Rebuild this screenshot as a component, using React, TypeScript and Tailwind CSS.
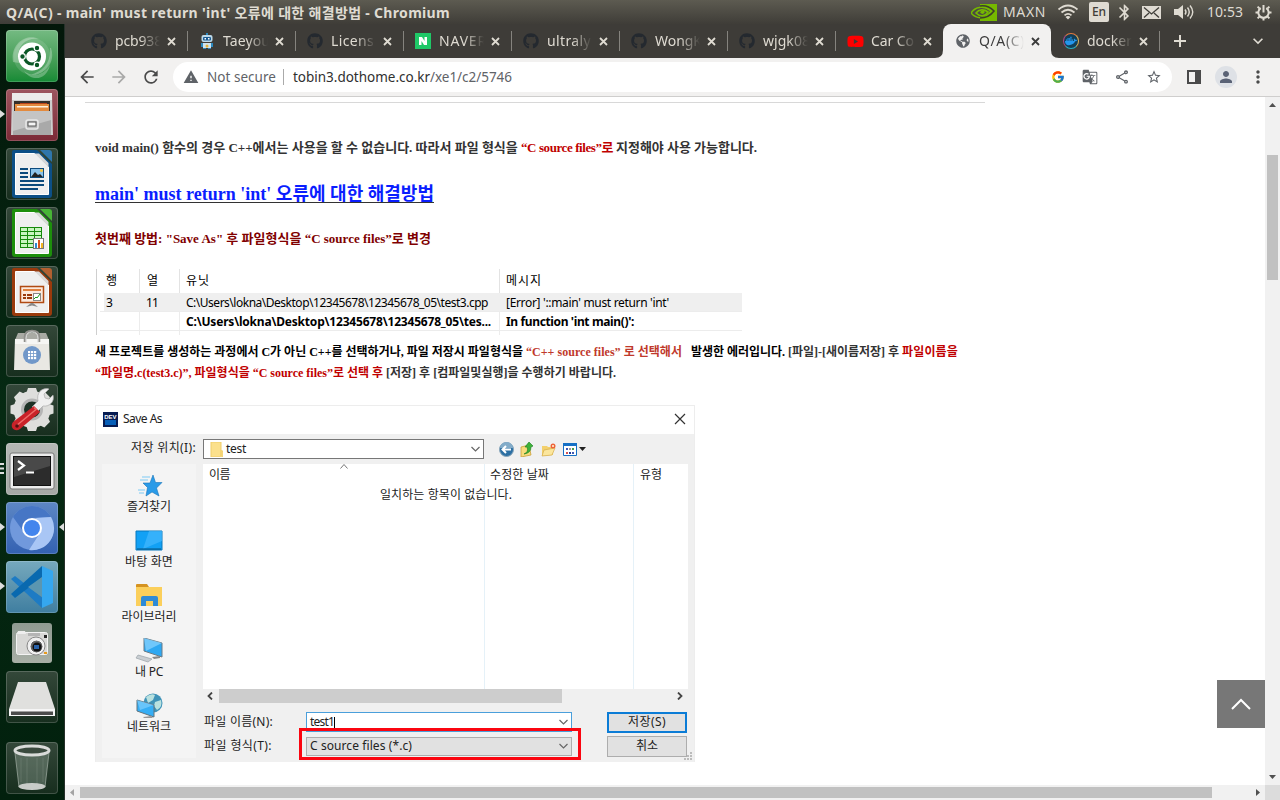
import { useLayoutEffect, useRef, type ReactNode } from "react";
import {
  MdArrowBack, MdArrowForward, MdBluetooth, MdExpandMore, MdGTranslate, MdMoreVert,
  MdOutlineShare, MdPerson, MdRefresh, MdStarBorder, MdWarning,
} from "react-icons/md";
import { FaGithub, FaGlobeAmericas, FaDocker, FaYoutube } from "react-icons/fa";
import { FcGoogle } from "react-icons/fc";

/* Single line of text whose tracking is adjusted to fill a given width. */
function Fit({ w, className = "", children }: { w: number; className?: string; children: ReactNode }) {
  const ref = useRef<HTMLSpanElement>(null);
  useLayoutEffect(() => {
    const el = ref.current;
    if (!el) return;
    el.style.letterSpacing = "0px";
    const n = (el.textContent ?? "").length;
    el.style.letterSpacing = `${(w - el.getBoundingClientRect().width) / n}px`;
  }, [w]);
  return <span ref={ref} className={`inline-block whitespace-pre ${className}`}>{children}</span>;
}

const Svg = ({ children, className = "size-[52px]", box = "0 0 52 52" }: { children: ReactNode; className?: string; box?: string }) => (
  <svg viewBox={box} className={`block shrink-0 ${className}`}>{children}</svg>
);

/* ---------- launcher ---------- */

function Tile({ children, className = "bg-linear-to-b from-[#34483a] to-[#172e1e]", mark }: { children: ReactNode; className?: string; mark?: "one" | "three" | "active" }) {
  return (
    <div className="relative flex h-[52px] w-full shrink-0 justify-center">
      {mark === "three" && (
        <Svg className="absolute left-0 top-[20px] h-3 w-1" box="0 0 4 12"><path d="M0 0h4v2H0zM0 4.5h4v2H0zM0 9h4v2H0z" fill="#ddd" /></Svg>
      )}
      {(mark === "one" || mark === "active") && (
        <Svg className="absolute left-0 top-[21px] h-2 w-[5px]" box="0 0 5 8"><path d="M0 0 5 4 0 8z" fill="#ddd" /></Svg>
      )}
      {mark === "active" && (
        <Svg className="absolute right-0 top-[21px] h-2 w-[5px]" box="0 0 5 8"><path d="M5 0 0 4 5 8z" fill="#ddd" /></Svg>
      )}
      <div className={`size-[52px] overflow-hidden rounded-[4px] ${className}`}>{children}</div>
      <div className="absolute left-[6px] top-0 size-[52px] rounded-[4px] shadow-[inset_0_0_0_1px_rgba(255,255,255,0.18)]" />
    </div>
  );
}

function Doc({ color, corner, children }: { color: string; corner: string; children: ReactNode }) {
  return (
    <Svg>
      <path d="M6 4q0-2 2-2h23L46 16v31q0 3-3 3H9q-3 0-3-3z" fill={color} />
      <path d="M34 2h9q3 0 3 3v9z" fill={corner} opacity=".85" />
      <path d="M9.500 5.500h19L42.500 19v27.500h-33z" fill="#efefef" stroke="#fff" />
      <path d="M28.500 5.500 42.500 19V15L33 5.500z" fill="#d9d9d9" />
      {children}
    </Svg>
  );
}

function Launcher() {
  return (
    <aside className="flex w-[65px] shrink-0 flex-col border-r border-[#26302a] bg-linear-to-b from-[#03170a] via-[#062a13] to-[#02200d] pt-[6px] gap-[7px]">
      <Tile className="bg-linear-to-b from-[#74ba82] to-[#138a35]">
        <Svg>
          <circle cx="26" cy="26.500" r="18.500" fill="#fff" opacity=".12" />
          <path d="M7 32C4 14 20 3 33 9c-14-2-24 8-20 24zM45 18c5 14-6 28-21 27 13-4 21-12 20-27zM18 41c9 7 20 4 26-6-3 14-17 18-26 6z" fill="#fff" opacity=".28" />
          <circle cx="26" cy="26.500" r="14" fill="#fff" />
          <circle cx="26" cy="26.500" r="7.500" fill="none" stroke="#0b5726" strokeWidth="3.200" />
          <g fill="#0b5726" stroke="#fff" strokeWidth="1.200"><circle cx="16.500" cy="26.500" r="2.800" /><circle cx="31" cy="18" r="2.800" /><circle cx="31" cy="35" r="2.800" /></g>
        </Svg>
      </Tile>
      <Tile mark="one" className="bg-linear-to-b from-[#9d5560] to-[#7b2936]">
        <Svg>
          <path d="M6 5q0-1 1-1h38q1 0 1 1l1 41H5z" fill="#cdcdcd" /><path d="M6 4h40v7H6z" fill="#ececec" />
          <path d="M8 12h36v11H8z" fill="#35302c" /><path d="M9 15h34v8H9z" fill="#e38a3e" /><path d="M11 17h31v1.500H11z" fill="#fff2dd" /><path d="M14 14h27v1H14z" fill="#b9441a" />
          <path d="M7 22h38v24H7z" fill="#a9a9a9" /><path d="M7 22h38v9L7 42z" fill="#c4c4c4" />
          <rect x="20" y="31" width="12" height="9" rx="2" fill="#bbb" stroke="#e8e8e8" strokeWidth="1.500" /><rect x="22" y="33" width="8" height="4" fill="#f5f5f5" stroke="#555" />
        </Svg>
      </Tile>
      <Tile>
        <Doc color="#0c4f86" corner="#2f7fc0">
          <path d="M14 20h8v2h-8zM14 24h8v2h-8zM14 28h8v2h-8zM14 32h24v2H14zM14 36h24v2H14zM14 40h18v2H14z" fill="#0c4a7c" />
          <rect x="24.500" y="20.500" width="13" height="9" fill="#8cc3ea" stroke="#0c4a7c" /><circle cx="35.500" cy="22.500" r="1.500" fill="#f5c542" /><path d="m25 29 4-5 3 3 2-1 3 3z" fill="#222" />
        </Doc>
      </Tile>
      <Tile>
        <Doc color="#1d8f0c" corner="#4bc936">
          <path d="M14 20h22v21H14z" fill="#168a0b" /><g fill="#c9f5c0">{[21, 25, 29, 33, 37].map((y) => [15, 22, 29].map((x) => <rect key={`${x}${y}`} x={x} y={y} width="6" height="3" />))}</g>
          <rect x="27.500" y="31.500" width="10" height="10" fill="#fff" stroke="#777" /><path d="M29 36h2v5h-2z" fill="#2f8ad0" /><path d="M32 33h2v8h-2z" fill="#d9541e" /><path d="M35 36h2v5h-2z" fill="#f3b61f" />
        </Doc>
      </Tile>
      <Tile>
        <Doc color="#9a3a0c" corner="#c9652f">
          <path d="M14.500 20.500h23v16h-23z" fill="#fce9dc" stroke="#b04a12" strokeWidth="1.500" /><path d="M17 23h18v2H17z" fill="#e0813f" />
          <path d="M17 28h3v2h-3zM17 31h3v2h-3zM21 28h5v2h-5zM21 31h5v2h-5z" fill="#9a3a0c" /><rect x="27.500" y="27.500" width="7" height="7" fill="#fff" stroke="#888" /><path d="m28 33 2-2 1 1 3-4" stroke="#1a9a1a" fill="none" />
          <path d="m20 41 5-4h2l5 4-6-1.500z" fill="#888" />
        </Doc>
      </Tile>
      <Tile>
        <Svg>
          <path d="m9 15 3-7h28l3 7z" fill="#a9aaa4" /><path d="M9 14h34l1 31H8z" fill="#e9e8e3" /><path d="M9 14h34v5H9z" fill="#fff" opacity=".6" />
          <path d="M19 17v-5q0-6 7-6t7 6v5" fill="none" stroke="#8e8e8a" strokeWidth="2.500" /><path d="M20 18v-5q0-6 6-6t6 6v5" fill="none" stroke="#e8e8e8" strokeWidth="1" />
          <circle cx="26" cy="30" r="9" fill="#7198c9" /><g fill="#fff">{[26, 29, 32].map((y) => [22, 25, 28].map((x) => <rect key={`${x}${y}`} x={x} y={y} width="2.200" height="2.200" />))}</g>
        </Svg>
      </Tile>
      <Tile>
        <Svg>
          <circle cx="26" cy="25.500" r="14" fill="none" stroke="#dededc" strokeWidth="9" />
          <g fill="#dededc">{[0, 45, 90, 135, 180, 225, 270, 315].map((a) => <path key={a} d="M22 4h8l2 6H20z" transform={`rotate(${a} 26 25.500)`} />)}</g>
          <circle cx="26" cy="25.500" r="9.500" fill="#1e3226" stroke="#b5b5b5" strokeWidth="3" />
          <path d="M32 17c-2-8 4-14 11-12l-5 5 1 4 4 1 4-4c2 7-4 12-10 11l-6 6-5-5z" fill="#f0f0f0" stroke="#aaa" strokeWidth=".7" />
          <path d="m28 22 6 6-20 17c-5 4-11-2-7-7z" fill="#c92229" /><path d="m28 23.500 2 2L10 42" stroke="#ef6b68" strokeWidth="1.500" fill="none" /><circle cx="11" cy="42" r="1.800" fill="#551012" />
        </Svg>
      </Tile>
      <Tile mark="three" className="bg-linear-to-b from-[#b5b8b5] to-[#a5a8a5]">
        <Svg>
          <rect x="4" y="10" width="44" height="36" rx="2" fill="#ececec" stroke="#777" /><rect x="7.500" y="13.500" width="37" height="29" fill="#2c2c2c" stroke="#111" /><path d="M8 14h36v9L8 34z" fill="#fff" opacity=".14" />
          <path d="m12 18 6 4.500-6 4.500" stroke="#fff" strokeWidth="2.200" fill="none" /><path d="M20 29.500h8" stroke="#fff" strokeWidth="2" />
        </Svg>
      </Tile>
      <Tile mark="active" className="bg-linear-to-b from-[#5d87c4] to-[#3361b2]">
        <Svg>
          <circle cx="26" cy="26" r="22" fill="#7199dc" /><path d="M7 15A22 22 0 0 1 45 15L26 16 17 29z" fill="#4676c5" /><path d="M45 15a22 22 0 0 1-22 33l11-17-4-15z" fill="#a9c6f5" />
          <circle cx="26" cy="26" r="10" fill="#fff" /><circle cx="26" cy="26" r="8" fill="#4385ed" />
        </Svg>
      </Tile>
      <Tile mark="one" className="bg-linear-to-b from-[#76a9bd] to-[#3f7ea0]">
        <Svg>
          <path d="m5 18 4-3 29 23-2 9z" fill="#1d7bc4" /><path d="m5 33 4 4 29-22-2-10z" fill="#0969af" /><path d="M36 5 47 10v32l-11 5z" fill="#35a7ef" /><path d="M36 16v20L22 26z" fill="#5b96b0" />
        </Svg>
      </Tile>
      <div className="ml-3 mt-[3px] size-10 shrink-0 rounded-[3px] bg-linear-to-b from-[#8f9b91] to-[#a8afa6]">
        <Svg className="size-10" box="0 0 40 40">
          <rect x="4.500" y="9.500" width="31" height="22" rx="2" fill="#d8d8d6" stroke="#f3f3f3" /><path d="M6 8h7l1 3H5z" fill="#eee" /><path d="M16 10h12v3H16z" fill="#b5b5b5" /><rect x="32" y="12" width="3" height="3" fill="#222" />
          <circle cx="24" cy="23" r="9" fill="#eee" stroke="#888" /><circle cx="24.500" cy="23.500" r="6.500" fill="#666" stroke="#fff" /><circle cx="25" cy="24" r="4.500" fill="#111" /><path d="M22 22h5v4h-5z" fill="#2961a8" /><path d="M32 29h3v2h-3z" fill="#e69a1c" />
        </Svg>
      </div>
      <div className="mt-px">
        <Tile>
          <Svg><path d="M12 11h28l9 27H3z" fill="#e0e0de" /><path d="M3 38h46v7H3z" fill="#f5f5f5" /><path d="M5 40.500h42v3.500H5z" fill="#4b4b4b" /></Svg>
        </Tile>
      </div>
      <div className="mt-3">
        <Tile>
          <Svg>
            <path d="m9 9 4 36q13 5 26 0l4-36z" fill="#c5d3c8" opacity=".28" /><ellipse cx="26" cy="44.500" rx="13.500" ry="3.500" fill="#c8cbc8" />
            <ellipse cx="26" cy="8.500" rx="17" ry="4.500" fill="#3a4a3e" stroke="#d9dbd9" strokeWidth="3" /><path d="m9 11 4 34M43 11l-4 34" stroke="#bcc6bd" strokeWidth=".6" /><path d="M15 16v24M21 16v26M31 16v26M37 16v24" stroke="#dfe8e0" opacity=".12" />
          </Svg>
        </Tile>
      </div>
    </aside>
  );
}

/* ---------- system bar ---------- */

function SystemBar() {
  return (
    <header className="flex h-6 shrink-0 items-center bg-linear-to-b from-[#5d5b51] to-[#3f3d38] pl-[6px] text-[#dfdbd2]">
      <Fit w={444} className="text-[14px] font-bold leading-[25px]">Q/A(C) - main' must return 'int' 오류에 대한 해결방법 - Chromium</Fit>
      <Svg className="ml-auto h-[17px] w-[26px]" box="0 0 26 17">
        <path d="M9 0h17v17H9z" fill="#76b900" />
        <path d="M0 9C4 3 12 1 20 7c-5 8-14 9-20 2z" fill="#4c4a43" stroke="#76b900" strokeWidth="1.500" />
        <path d="M5 9c3-4 8-4 12-1-3 5-8 5-12 1z" fill="none" stroke="#76b900" strokeWidth="1.600" /><path d="M9 8c2-2 4-1 5 0-2 3-4 2-5 0z" fill="#76b900" /><path d="M9 2c6-1 11 2 14 5-3 4-8 7-14 7" fill="none" stroke="#3c3f2a" strokeWidth="1.600" />
      </Svg>
      <Fit w={43} className="ml-[6px] text-[14px] leading-6">MAXN</Fit>
      <Svg className="ml-[11px] h-[16px] w-[22px]" box="0 0 22 16">
        <g fill="none" stroke="#dfdbd2" strokeWidth="1.700"><path d="M1.500 5.500q9.500-8 19 0" /><path d="M4.500 8.500q6.500-5.500 13 0" /><path d="M7.500 11.300q3.500-3 7 0" /></g><path d="m11 15.500-2.500-2.600q2.500-2 5 0z" fill="#dfdbd2" />
      </Svg>
      <span className="ml-[10px] flex h-5 w-5 items-center justify-center rounded-[2px] bg-[#dfdbd2] text-[12px] font-medium text-[#3f3d38]">En</span>
      <MdBluetooth className="ml-[6px] size-[19px]" />
      <Svg className="ml-[8px] h-[13px] w-[19px]" box="0 0 19 13"><path d="M0 0h19v13H0z" fill="#dfdbd2" /><path d="m2 1.500 7.500 6.500L17 1.500M2 11.500 7 7m10 4.500L12 7" fill="none" stroke="#3f3d38" strokeWidth="1.300" /></Svg>
      <Svg className="ml-[13px] h-[16px] w-[21px]" box="0 0 21 16">
        <path d="M0 5h4l5-4v14l-5-4H0z" fill="#dfdbd2" /><g fill="none" stroke="#dfdbd2" strokeWidth="1.400"><path d="M11 5.500q2 2.500 0 5" /><path d="M13.500 3.500q3.500 4.500 0 9" /><path d="M16 1.500q5.500 6.500 0 13" /></g>
      </Svg>
      <Fit w={36} className="ml-[12px] text-[14px] leading-6">10:53</Fit>
      <Svg className="ml-3 mr-[8px] size-[17px]" box="0 0 17 17">
        <g fill="none" stroke="#dfdbd2"><path d="M5.800 4.200a5.200 5.200 0 1 0 5.400 0" strokeWidth="2" /><path d="M8.500 1v7.500" strokeWidth="2" /><path d="M.5 8.500h3M13.500 8.500h3M2.600 2.600l1.800 1.800M14.400 2.600l-1.800 1.800M2.600 14.400l1.800-1.800M14.400 14.400l-1.800-1.800M8.500 13.500v3" strokeWidth="2" /></g>
      </Svg>
    </header>
  );
}

/* ---------- browser chrome ---------- */

const Robot = () => (
  <Svg className="size-4" box="0 0 16 16"><rect x="2.500" y="2" width="11" height="7" rx="2" fill="#bcd9ea" /><rect x="4" y="4" width="8" height="3.500" rx="1" fill="#1c5c93" /><path d="M5.500 5h1.500v1.500H5.500zM9 5h1.500v1.500H9z" fill="#fff" /><path d="M7 0h2v2H7z" fill="#2d8ac0" /><path d="M4 10h8v5H4z" fill="#cfe3ef" /><path d="M2 10h2v4H2zM12 10h2v4h-2z" fill="#2d8ac0" /><circle cx="8" cy="13" r="1.500" fill="#e5b33a" /><path d="M4 15h3v1H4zM9 15h3v1H9z" fill="#2d8ac0" /></Svg>
);
const Naver = () => (
  <Svg className="size-4" box="0 0 16 16"><path d="M0 0h16v16H0z" fill="#1fc867" /><path d="M4 4h3l2.500 4V4H12v8H9L6.500 8v4H4z" fill="#fff" /></Svg>
);
const Youtube = () => (
  <span className="relative flex h-4 w-4 items-center justify-center"><FaYoutube className="size-[17px] shrink-0 text-[#f00]" /></span>
);
const Docker = () => (
  <span className="flex size-4 items-center justify-center rounded-full border-[1.5px] border-t-[#e87a3c] border-r-[#ddb35b] border-b-[#2bb1c4] border-l-[#a94b86] bg-[#123f57]"><FaDocker className="size-[12px] text-[#2496ed]" /></span>
);
const Hub = () => <FaGithub className="size-4 text-[#24292f]" />;

const tabs: { icon: ReactNode; title: string; w: number; active?: boolean }[] = [
  { icon: <Hub />, title: "pcb938", w: 47 },
  { icon: <Robot />, title: "Taeyou", w: 47 },
  { icon: <Hub />, title: "Licens", w: 43 },
  { icon: <Naver />, title: "NAVER", w: 48 },
  { icon: <Hub />, title: "ultraly", w: 44 },
  { icon: <Hub />, title: "WongK", w: 47 },
  { icon: <Hub />, title: "wjgk08", w: 47 },
  { icon: <Youtube />, title: "Car Co", w: 43 },
  { icon: <FaGlobeAmericas className="size-[14px] text-[#5f6368]" />, title: "Q/A(C)", w: 46, active: true },
  { icon: <Docker />, title: "docker", w: 45 },
];

function TabStrip() {
  return (
    <div className="flex h-[34px] shrink-0 bg-[#3e3c38] pl-[14px] text-[#dfdbd2]">
      {tabs.map((t, i) => (
        <div key={i} className={`relative flex w-[108px] shrink-0 items-center pl-3 ${t.active ? "rounded-t-[8px] bg-[#f2f1f0] text-[#3c3c3c]" : ""}`}>
          {t.active && (
            <>
              <Svg className="absolute -left-2 bottom-0 size-2" box="0 0 8 8"><path d="M8 0v8H0q8 0 8-8z" fill="#f2f1f0" /></Svg>
              <Svg className="absolute -right-2 bottom-0 size-2" box="0 0 8 8"><path d="M0 0v8h8q-8 0-8-8z" fill="#f2f1f0" /></Svg>
            </>
          )}
          <span className="flex w-4 justify-center">{t.icon}</span>
          <span className="ml-2 w-[45px] text-[14px] leading-5 [mask-image:linear-gradient(to_right,black_55%,transparent_100%)]"><Fit w={t.w}>{t.title}</Fit></span>
          <Svg className="ml-[7px] size-[9px]" box="0 0 9 9"><path d="m1 1 7 7M8 1 1 8" fill="none" stroke="currentColor" strokeWidth="1.800" /></Svg>
          {!t.active && i !== 7 && <span className="absolute right-[-1px] top-[7px] h-5 w-px bg-[#85837e]" />}
        </div>
      ))}
      <Svg className="ml-[15px] mt-[11px] size-[12px]" box="0 0 12 12"><path d="M6 0v12M0 6h12" fill="none" stroke="currentColor" strokeWidth="2" /></Svg>
      <MdExpandMore className="ml-auto mr-[12px] mt-[7px] size-5" />
    </div>
  );
}

function Toolbar() {
  return (
    <div className="flex h-[39px] shrink-0 items-center border-b border-[#cfcecd] bg-[#f2f1f0] pl-[12px] text-[#4a4a4a]">
      <MdArrowBack className="size-5" />
      <MdArrowForward className="ml-3 size-5 text-[#a9a9a8]" />
      <MdRefresh className="ml-3 size-5" />
      <div className="ml-[12px] flex h-[30px] w-[999px] items-center rounded-full bg-white pl-[10px] text-[13.500px] text-[#5f6368]">
        <MdWarning className="size-4" />
        <Fit w={69} className="ml-2">Not secure</Fit>
        <span className="ml-[7px] h-4 w-px bg-[#aaa]" />
        <span className="ml-[9px] flex"><Fit w={137} className="text-[#303030]">tobin3.dothome.co.kr</Fit><Fit w={82}>/xe1/c2/5746</Fit></span>
        <FcGoogle className="ml-auto size-[14px]" />
        <MdGTranslate className="ml-[17px] size-4" />
        <MdOutlineShare className="ml-4 size-4" />
        <MdStarBorder className="ml-4 mr-[10px] size-4" />
      </div>
      <Svg className="ml-[15px] h-[14px] w-[14px]" box="0 0 14 14"><path d="M0 0h14v14H0zM2 2v10h6V2z" fill="#4a4a4a" fillRule="evenodd" /></Svg>
      <span className="ml-[14px] flex size-[22px] items-center justify-center rounded-full bg-[#dee1e6]"><MdPerson className="size-[18px] text-[#5a6275]" /></span>
      <MdMoreVert className="ml-[11px] size-5" />
    </div>
  );
}

/* ---------- article ---------- */

function ErrorTable() {
  return (
    <div className="mt-[20px] ml-px flex h-[66px] w-[646px] flex-col border-l border-[#cfcfcf] text-[12px] text-black">
      <div className="flex h-6 shrink-0 items-center leading-6">
        <div className="h-full w-[43px] border-r border-[#e3e3e3] pl-[9px]">행</div>
        <div className="h-full w-[40px] border-r border-[#e3e3e3] pl-[7px]">열</div>
        <div className="h-full w-[320px] border-r border-[#e3e3e3] pl-[6px]"><Fit w={24}>유닛</Fit></div>
        <div className="pl-[6px]"><Fit w={36}>메시지</Fit></div>
      </div>
      <div className="ml-[7px] flex h-[18px] shrink-0 bg-[#efefef] leading-[19px]">
        <div className="w-[40px] pl-[2px]">3</div>
        <div className="w-[40px] pl-[2px]"><Fit w={12}>11</Fit></div>
        <div className="w-[320px] pl-[2px]"><Fit w={302}>C:\Users\lokna\Desktop\12345678\12345678_05\test3.cpp</Fit></div>
        <div className="pl-[2px]"><Fit w={163}>[Error] '::main' must return 'int'</Fit></div>
      </div>
      <div className="ml-[3px] flex h-[20px] shrink-0 border-y border-[#ececec] font-bold leading-[19px]">
        <div className="w-[40px] border-r border-[#ececec]" />
        <div className="w-[40px] border-r border-[#ececec]" />
        <div className="w-[320px] border-r border-[#ececec] pl-[6px]"><Fit w={305}>C:\Users\lokna\Desktop\12345678\12345678_05\tes...</Fit></div>
        <div className="pl-[6px]"><Fit w={128}>In function 'int main()':</Fit></div>
      </div>
      <div className="ml-[3px] flex h-1"><div className="w-[40px] border-r border-[#ececec]" /><div className="w-[40px] border-r border-[#ececec]" /><div className="w-[320px] border-r border-[#ececec]" /></div>
    </div>
  );
}

const Chevron = ({ className = "" }: { className?: string }) => (
  <Svg className={`h-[6px] w-[9px] ${className}`} box="0 0 9 6"><path d="m.5 1 4 4 4-4" fill="none" stroke="#666" strokeWidth="1.200" /></Svg>
);

const places: { label: string; w: number; icon: ReactNode }[] = [
  { label: "즐겨찾기", w: 44, icon: <><path d="m18 2 2.500 7.500H27l-5.500 5.500 2.500 8-7-4-6 4 1.500-8.500L8 10h7z" fill="#2a9be8" stroke="#1674b8" strokeWidth=".6" /><path d="M7 4h8M5 7h8M3 17h7M4 20h5" stroke="#7ccaf5" /></> },
  { label: "바탕 화면", w: 48, icon: <><path d="M1 3h26v19H1z" fill="#12a1f5" stroke="#0878bd" /><path d="M14 3h13v10L8 21z" fill="#4dbcff" opacity=".6" /><path d="M2 21h24" stroke="#06527f" /></> },
  { label: "라이브러리", w: 55, icon: <><path d="M1 2q0-1 1-1h10l2 3H1z" fill="#d59321" /><path d="M1 4h26v19H1z" fill="#fbcf5b" /><path d="M6 23v-8q0-2 2-2h13q2 0 2 2v8h-5v-5h-7v5z" fill="#2f8bd6" /></> },
  { label: "내 PC", w: 28, icon: <><path d="m9 0 18 5v14L9 13z" fill="#2fa8f2" stroke="#6b7b85" /><path d="m9 0 18 5-16 8z" fill="#8bd4ff" opacity=".7" /><path d="m3 17 14 4-4 3-12-4z" fill="#c9ced2" stroke="#9aa2a8" strokeWidth=".7" /><path d="m17 19 8-1v2l-6 1z" fill="#888" /></> },
  { label: "네트워크", w: 44, icon: <><circle cx="18" cy="10" r="9.500" fill="#3f93b8" /><path d="M11 4q5-4 9-2l-2 5-5 3zM20 9l6-2q2 7-4 10l-3-4z" fill="#b9e1df" /><path d="m2 7 17 5v12L2 18z" fill="#36aef5" stroke="#61747f" /><path d="m2 7 17 5L5 17z" fill="#8bd4ff" opacity=".6" /><path d="m8 24 8-1 2 2h-9z" fill="#999" /></> },
];

function SaveDialog() {
  return (
    <div className="relative mt-[21px] flex h-[357px] w-[600px] flex-col border border-b-0 border-[#ededed] bg-[#f0f0f0] text-[12px] text-[#222]">
      <div className="flex h-[28px] shrink-0 items-center bg-white pb-[2px] pl-[7px] pr-[8px]">
        <Svg className="size-[15px]" box="0 0 15 15"><path d="M0 0h15v15H0z" fill="#071b51" /><path d="M2 8h11v5H2z" fill="#075fb8" /><text x="1.200" y="6.500" fontSize="6" fontWeight="700" fill="#fff" fontFamily="Liberation Sans">DEV</text></Svg>
        <Fit w={39} className="ml-[5px]">Save As</Fit>
        <Svg className="ml-auto size-[12px]" box="0 0 12 12"><path d="m1 1 10 10M11 1 1 11" stroke="#333" strokeWidth="1.200" /></Svg>
      </div>
      <div className="flex h-[30px] shrink-0 items-center">
        <Fit w={65} className="ml-[35px] pb-[2px]">저장 위치(I):</Fit>
        <div className="ml-[7px] flex h-[20px] w-[281px] items-center border border-[#777] bg-white pl-[6px] pr-[3px]">
          <Svg className="h-[15px] w-[13px]" box="0 0 13 15"><path d="M1 0h10v9h2v6H1z" fill="#fbe08c" stroke="#efcd6b" /><path d="M10 8h2v6h-2z" fill="#f5d474" /></Svg>
          <Fit w={20} className="ml-[3px]">test</Fit>
          <Chevron className="ml-auto" />
        </div>
        <Svg className="ml-[15px] size-[15px]" box="0 0 15 15"><circle cx="7.500" cy="7.500" r="7" fill="#2c6fa3" stroke="#88a5b9" /><path d="M1 6a6.500 6 0 0 1 13 0z" fill="#83acc9" /><path d="M12 7.500H4M7 4 3.500 7.500 7 11" stroke="#fff" strokeWidth="2" fill="none" /></Svg>
        <Svg className="ml-[5px] size-[15px]" box="0 0 15 15"><path d="m2 5 8-2 2 10-10 2z" fill="#f8dc7c" stroke="#caa03a" strokeWidth=".8" /><path d="M5 12q5-2 3-7H6l4-5 4 4-2 1q0 6-7 7z" fill="#3eb33a" stroke="#1a7a1d" strokeWidth=".6" /></Svg>
        <Svg className="ml-[7px] size-[15px]" box="0 0 15 15"><path d="M1 4h5l1 1h5v8L1 14z" fill="#f3d06c" /><path d="m3 8 11-2-3 7-10 1z" fill="#fbe69d" stroke="#d4ac4a" strokeWidth=".7" /><circle cx="12" cy="4" r="2.500" fill="#ee6238" /><circle cx="12" cy="4" r="1" fill="#ffd" /></Svg>
        <Svg className="ml-[7px] h-[13px] w-[23px]" box="0 0 23 13"><path d="M.5.5h13v12H.5z" fill="#fff" stroke="#1670c5" /><path d="M0 0h14v3H0z" fill="#1670c5" /><path d="M3 5h2v2H3zM9 9h2v2H9z" fill="#4059b5" /><path d="M6 5h2v2H6z" fill="#999" /><path d="M9 5h2v2H9z" fill="#4c9b48" /><path d="M3 9h2v2H3z" fill="#d45353" /><path d="M6 9h2v2H6z" fill="#223c9a" /><path d="M16 4h7l-3.500 4z" fill="#222" /></Svg>
      </div>
      <div className="flex flex-1">
        <div className="ml-[6px] flex h-[294px] w-[94px] flex-col items-center bg-[#f4f4f4] pt-[9px]">
          {places.map((p) => (
            <div key={p.label} className="flex h-[55px] flex-col items-center">
              <Svg className="h-[25px] w-[28px]" box="0 0 28 25">{p.icon}</Svg>
              <Fit w={p.w} className="leading-[18px]">{p.label}</Fit>
            </div>
          ))}
        </div>
        <div className="ml-[7px] w-[485px]">
          <div className="relative flex h-[225px] bg-white leading-[22px]">
            <div className="w-[282px] border-r border-[#e5f1f8] pl-[6px]"><Fit w={21}>이름</Fit></div>
            <div className="w-[149px] border-r border-[#e5f1f8] pl-[5px]"><Fit w={59}>수정한 날짜</Fit></div>
            <div className="pl-[6px]"><Fit w={22}>유형</Fit></div>
            <Svg className="absolute left-[137px] top-0 h-[5px] w-[8px]" box="0 0 8 5"><path d="m.5 4.500 3.500-4 3.500 4" fill="none" stroke="#777" /></Svg>
            <Fit w={132} className="absolute left-[177px] top-[20px]">일치하는 항목이 없습니다.</Fit>
          </div>
          <div className="flex h-[14px] items-center">
            <Svg className="ml-[4px] h-2 w-[6px]" box="0 0 6 8"><path d="M5 .5 1.500 4 5 7.500" fill="none" stroke="#444" strokeWidth="1.800" /></Svg>
            <div className="ml-[6px] h-[14px] w-[343px] bg-[#cdcdcd]" />
            <Svg className="ml-auto mr-[5px] h-2 w-[6px]" box="0 0 6 8"><path d="m1 .5 3.500 3.500L1 7.500" fill="none" stroke="#444" strokeWidth="1.800" /></Svg>
          </div>
          <div className="mt-[9px] flex h-[20px] items-center pl-px">
            <Fit w={69}>파일 이름(N):</Fit>
            <div className="ml-[33px] flex h-[20px] w-[266px] items-center border border-[#4a9fdb] bg-white pl-[3px] pr-[3px]"><Fit w={24}>test1</Fit><span className="h-[11px] w-px bg-black" /><Chevron className="ml-auto" /></div>
            <button className="ml-[35px] h-[21px] w-[80px] border-2 border-[#0b7cd6] bg-[#e1e1e1] leading-[16px]"><Fit w={38}>저장(S)</Fit></button>
          </div>
          <div className="mt-[4px] flex h-[20px] items-center pl-px">
            <Fit w={68} className="pb-px">파일 형식(T):</Fit>
            <div className="ml-[34px] flex h-[19px] w-[266px] items-center border border-[#adadad] bg-[#e1e1e1] pl-[3px] pr-[3px]"><Fit w={102}>C source files (*.c)</Fit><Chevron className="ml-auto" /></div>
            <button className="ml-[35px] h-[21px] w-[80px] border border-[#adadad] bg-[#e1e1e1] leading-[18px]"><Fit w={22}>취소</Fit></button>
          </div>
        </div>
      </div>
      <div className="absolute left-[203px] top-[322px] h-[32px] w-[282px] border-[3px] border-[#fb0510]" />
      <Svg className="absolute bottom-[2px] right-[2px] size-2" box="0 0 8 8"><path d="M6 0h2v2H6zM3 3h2v2H3zM6 3h2v2H6zM0 6h2v2H0zM3 6h2v2H3zM6 6h2v2H6z" fill="#bbb" /></Svg>
    </div>
  );
}

function Article() {
  return (
    <main className="relative h-full min-w-0 flex-1 overflow-hidden bg-white pl-[20px] pt-[5px]">
      <div className="h-px w-[900px] bg-[#d8d8d8]" />
      <div className="pl-[10px]">
        <p className="mt-[35px] flex h-5 font-['Liberation_Serif','Noto_Sans_CJK_KR',serif] text-[13px] font-bold leading-5 text-[#333]">
          <Fit w={426}>{"void main() 함수의 경우 C++에서는 사용을 할 수 없습니다. 따라서 파일 형식을 "}</Fit>
          <Fit w={95} className="text-[#c00000]">{"“C source files”로 "}</Fit>
          <Fit w={141}>지정해야 사용 가능합니다.</Fit>
        </p>
        <h2 className="mt-[21px] h-[30px] font-['Liberation_Serif','Noto_Sans_CJK_KR',serif] text-[18px] font-bold leading-[31px] text-[#0a1eff]">
          <span className="inline-block h-[24px] border-b border-[#333]"><Fit w={339}>main' must return 'int' 오류에 대한 해결방법</Fit></span>
        </h2>
        <h3 className="mt-[20px] h-5 font-['Liberation_Serif','Noto_Sans_CJK_KR',serif] text-[13px] font-bold leading-5 text-[#800000]">
          <Fit w={336}>첫번째 방법: "Save As" 후 파일형식을 “C source files”로 변경</Fit>
        </h3>
        <ErrorTable />
        <div className="mt-[7px] font-['Liberation_Serif','Noto_Sans_CJK_KR',serif] text-[12px] font-bold leading-[21px] text-[#333]">
          <p className="flex h-[21px]">
            <Fit w={431} className="text-black">{"새 프로젝트를 생성하는 과정에서 C가 아닌 C++를 선택하거나, 파일 저장시 파일형식을 "}</Fit>
            <Fit w={156} className="text-[#c0392b]">“C++ source files” 로 선택해서</Fit>
            <Fit w={106} className="pl-[9px] text-black">{"발생한 에러입니다. "}</Fit>
            <Fit w={114}>{"[파일]-[새이름저장] 후 "}</Fit>
            <Fit w={56} className="text-[#c00000]">파일이름을</Fit>
          </p>
          <p className="flex h-[21px]">
            <Fit w={291} className="text-[#c00000]">{"“파일명.c(test3.c)”, 파일형식을 “C source files”로 선택 후 "}</Fit>
            <Fit w={230}>[저장] 후 [컴파일및실행]을 수행하기 바랍니다.</Fit>
          </p>
        </div>
        <SaveDialog />
      </div>
      <button className="absolute bottom-[57px] right-0 flex size-12 items-center justify-center bg-[#777]">
        <Svg className="h-[13px] w-[20px]" box="0 0 20 13"><path d="m1 11 9-9 9 9" fill="none" stroke="#fff" strokeWidth="2" /></Svg>
      </button>
    </main>
  );
}

export default function App() {
  return (
    <div className="flex h-[800px] w-[1280px] flex-col overflow-hidden font-['Noto_Sans','Noto_Sans_CJK_KR',sans-serif]">
      <SystemBar />
      <div className="flex min-h-0 flex-1">
        <Launcher />
        <div className="flex min-w-0 flex-1 flex-col">
          <TabStrip />
          <Toolbar />
          <div className="flex h-[688px]">
            <Article />
            <div className="flex w-[15px] flex-col items-center bg-[#f1f1f1]">
              <Svg className="mt-[6px] h-[4px] w-[7px]" box="0 0 7 4"><path d="m0 4 3.500-4L7 4z" fill="#505050" /></Svg>
              <div className="mt-[48px] h-[125px] w-[11px] bg-[#c1c1c1]" />
              <Svg className="mb-[6px] mt-auto h-[4px] w-[7px]" box="0 0 7 4"><path d="m0 0 3.500 4L7 0z" fill="#505050" /></Svg>
            </div>
          </div>
          <div className="flex h-[15px] items-center bg-[#f1f1f1]">
            <Svg className="ml-[5px] h-[7px] w-[4px]" box="0 0 4 7"><path d="M4 0 0 3.500 4 7z" fill="#a3a3a3" /></Svg>
            <div className="ml-[6px] h-[11px] w-[1132px] bg-[#c1c1c1]" />
            <Svg className="ml-auto mr-[5px] h-[7px] w-[4px]" box="0 0 4 7"><path d="m0 0 4 3.500L0 7z" fill="#505050" /></Svg>
            <div className="h-[15px] w-[15px] bg-[#dcdcdc]" />
          </div>
        </div>
      </div>
    </div>
  );
}
